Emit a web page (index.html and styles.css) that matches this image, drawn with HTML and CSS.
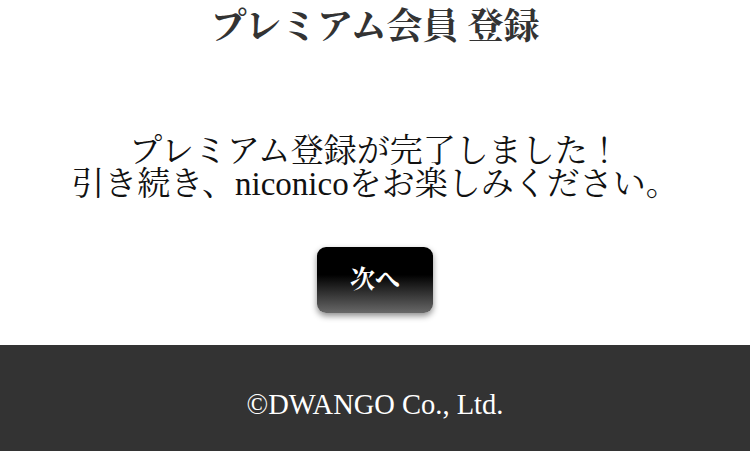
FILE: index.html
```html
<!DOCTYPE html>
<html lang="ja">
<head>
<meta charset="utf-8">
<title>プレミアム会員 登録</title>
<link rel="stylesheet" href="styles.css">
</head>
<body>
<div class="page">
  <h1 class="title">プレミアム会員 登録</h1>
  <p class="message">プレミアム登録が完了しました！<br>引き続き、niconicoをお楽しみください。</p>
  <a class="next-button" href="#">次へ</a>
</div>
<footer class="footer">©DWANGO Co., Ltd.</footer>
</body>
</html>
```
FILE: styles.css
```css
html, body {
  margin: 0;
  padding: 0;
  background: #ffffff;
}
body {
  font-family: "Liberation Serif", "Noto Serif CJK JP", "Noto Sans CJK JP", serif;
  color: #111111;
}
.page {
  display: flex;
  flex-direction: column;
  align-items: center;
  padding-top: 3px;
}
.title {
  margin: 0;
  font-size: 36px;
  line-height: 48px;
  font-weight: bold;
  color: #333333;
}
.message {
  margin: 84px 0 0;
  font-size: 33px;
  line-height: 33px;
  text-align: center;
  color: #111111;
}
.next-button {
  margin-top: 46px;
  width: 116px;
  height: 66px;
  box-sizing: border-box;
  padding-bottom: 6px;
  display: flex;
  align-items: center;
  justify-content: center;
  border-radius: 9px;
  background: linear-gradient(to bottom, #000000 0%, #000000 42%, #686868 100%);
  box-shadow: 0 3px 6px rgba(0, 0, 0, 0.45);
  color: #ffffff;
  font-size: 25px;
  font-weight: bold;
  text-decoration: none;
}
.footer {
  margin-top: 32px;
  height: 106px;
  box-sizing: border-box;
  padding-top: 14px;
  display: flex;
  align-items: center;
  justify-content: center;
  background: #333333;
  color: #ffffff;
  font-size: 28.5px;
}
```
